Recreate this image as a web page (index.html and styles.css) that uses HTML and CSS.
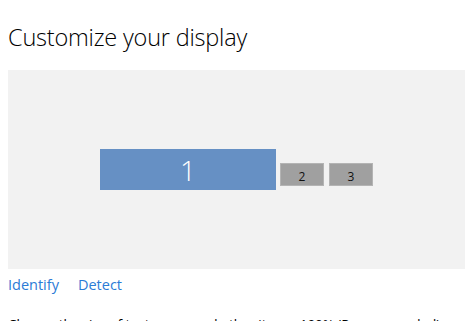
FILE: index.html
```html
<!DOCTYPE html>
<html lang="en">
<head>
    <meta charset="UTF-8">
    <title>Display</title>
    <link rel="stylesheet" href="styles.css">
</head>
<body>
    <h1 class="title">Customize your display</h1>
    <div class="canvas">
        <div class="monitors">
            <div class="monitor primary">1</div>
            <div class="monitor small">2</div>
            <div class="monitor small">3</div>
        </div>
    </div>
    <div class="links">
        <a href="#" class="link">Identify</a>
        <a href="#" class="link">Detect</a>
    </div>
    <p class="scale">Change the size of text, apps, and other items: 100% (Recommended)</p>
</body>
</html>
```

FILE: styles.css
```css
body {
    margin: 0;
    padding: 0 4px 0 8px;
    background: #fff;
    font-family: 'Open Sans', 'Liberation Sans', sans-serif;
    color: #000;
    overflow: hidden;
}

.title {
    margin: 21px 0 0;
    height: 49px;
    font-size: 23.5px;
    font-weight: 300;
    line-height: 32px;
    letter-spacing: -0.2px;
}

.canvas {
    display: flex;
    justify-content: center;
    align-items: center;
    height: 199px;
    background: #f2f2f2;
}

.monitors {
    display: flex;
    align-items: flex-end;
    gap: 4px;
}

.monitor {
    display: flex;
    justify-content: center;
    align-items: center;
    box-sizing: border-box;
}

.primary {
    width: 176px;
    height: 41px;
    background: #6690c4;
    color: #fff;
    font-size: 28px;
    font-weight: 300;
}

.small {
    width: 44px;
    height: 23px;
    margin-bottom: 4px;
    padding-top: 4px;
    background: #a0a0a0;
    border: 1px solid #b4b4b4;
    color: #111;
    font-size: 12px;
}

.small + .small {
    margin-left: 1px;
}

.links {
    display: flex;
    gap: 19px;
    margin-top: 6px;
}

.link {
    color: #2b7bd6;
    text-decoration: none;
    font-size: 14.5px;
    line-height: 20px;
}

.scale {
    margin: 20px 0 0;
    font-size: 13.6px;
    line-height: 20px;
    letter-spacing: -0.1px;
    white-space: nowrap;
}
```
